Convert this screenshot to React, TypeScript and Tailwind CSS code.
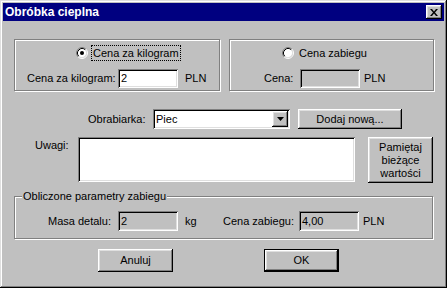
import React from "react";

function Radio({ checked }: { checked: boolean }) {
  return (
    <svg width="12" height="12" viewBox="0 0 12 12" className="shrink-0">
      <circle cx="6" cy="6" r="4.5" fill="#fff" />
      <path d="M2.11 9.89A5.5 5.5 0 0 1 9.89 2.11" stroke="#808080" fill="none" />
      <path d="M9.89 2.11A5.5 5.5 0 0 1 2.11 9.89" stroke="#fff" fill="none" />
      <path d="M2.82 9.18A4.5 4.5 0 0 1 9.18 2.82" stroke="#000" fill="none" />
      <path d="M9.18 2.82A4.5 4.5 0 0 1 2.82 9.18" stroke="#dfdfdf" fill="none" />
      {checked && <circle cx="6" cy="6" r="2" fill="#000" />}
    </svg>
  );
}

const sunken =
  "shadow-[inset_1px_1px_#808080,inset_-1px_-1px_#fff,inset_2px_2px_#000,inset_-2px_-2px_#dfdfdf]";
const raised =
  "shadow-[inset_-1px_-1px_#000,inset_1px_1px_#fff,inset_-2px_-2px_#808080,inset_2px_2px_#dfdfdf]";
const groupBox =
  "border border-[#808080] shadow-[inset_1px_1px_#fff,1px_1px_#fff]";

export default function App() {
  return (
    <div className="w-[447px] h-[288px] bg-[#c0c0c0] p-[3px] shadow-[inset_-1px_-1px_#000,inset_1px_1px_#dfdfdf,inset_-2px_-2px_#808080,inset_2px_2px_#fff] font-['Liberation_Sans',Arial,sans-serif] text-[11px] text-black leading-none">
      {/* Title bar */}
      <div className="h-[18px] bg-[#000080] flex items-center justify-between">
        <span className="pl-[2px] text-white font-bold text-[12px]">Obróbka cieplna</span>
        <div className={`w-[16px] h-[14px] mr-[2px] bg-[#c0c0c0] flex items-center justify-center ${raised}`}>
          <svg width="8" height="7" viewBox="0 0 8 7">
            <path d="M0 0h2l2 2.5L6 0h2L5 3.5 8 7H6L4 4.5 2 7H0l3-3.5z" fill="#000" />
          </svg>
        </div>
      </div>

      {/* Content */}
      <div className="pl-[11px] pt-[18px] flex flex-col">
        {/* Row 1: two group boxes */}
        <div className="flex gap-[9px]">
          <div className={`w-[206px] h-[52px] flex flex-col ${groupBox}`}>
            <div className="mt-[5px] h-[16px] flex items-center pl-[61px]">
              <Radio checked />
              <span className="ml-[3px] h-[16px] px-[1px] border border-dotted border-black flex items-center">
                Cena za kilogram
              </span>
            </div>
            <div className="mt-[8px] flex items-center pl-[12px]">
              <span className="w-[91px]">Cena za kilogram:</span>
              <div className={`w-[60px] h-[19px] bg-white flex items-center pl-[3px] ${sunken}`}>2</div>
              <span className="ml-[7px]">PLN</span>
            </div>
          </div>
          <div className={`w-[205px] h-[52px] flex flex-col ${groupBox}`}>
            <div className="mt-[5px] h-[16px] flex items-center pl-[52px]">
              <Radio checked={false} />
              <span className="ml-[5px]">Cena zabiegu</span>
            </div>
            <div className="mt-[8px] flex items-center pl-[34px]">
              <span className="w-[36px]">Cena:</span>
              <div className={`w-[60px] h-[19px] bg-[#c0c0c0] ${sunken}`} />
              <span className="ml-[4px]">PLN</span>
            </div>
          </div>
        </div>

        {/* Row 2: Obrabiarka */}
        <div className="mt-[18px] flex items-center pl-[74px]">
          <span className="w-[65px]">Obrabiarka:</span>
          <div className={`w-[137px] h-[20px] bg-white flex items-center justify-between pl-[3px] pr-[2px] ${sunken}`}>
            <span>Piec</span>
            <div className={`w-[16px] h-[16px] bg-[#c0c0c0] flex items-center justify-center ${raised}`}>
              <svg width="7" height="4" viewBox="0 0 7 4">
                <path d="M0 0h7L3.5 4z" fill="#000" />
              </svg>
            </div>
          </div>
          <div className={`ml-[8px] w-[104px] h-[20px] flex items-center justify-center ${raised}`}>
            Dodaj nową...
          </div>
        </div>

        {/* Row 3: Uwagi */}
        <div className="mt-[8px] flex items-start pl-[21px]">
          <span className="w-[43px] mt-[3px]">Uwagi:</span>
          <div className={`w-[277px] h-[45px] bg-white ${sunken}`} />
          <div className={`ml-[13px] w-[65px] h-[46px] flex flex-col items-center justify-center leading-[13px] ${raised}`}>
            <span>Pamiętaj</span>
            <span>bieżące</span>
            <span>wartości</span>
          </div>
        </div>

        {/* Group 3 */}
        <div className={`relative mt-[13px] w-[419px] h-[43px] ${groupBox}`}>
          <span className="absolute left-[7px] top-[-6px] px-[1px] bg-[#c0c0c0]">
            Obliczone parametry zabiegu
          </span>
          <div className="mt-[14px] flex items-center pl-[33px]">
            <span className="w-[70px]">Masa detalu:</span>
            <div className={`w-[60px] h-[20px] bg-[#c0c0c0] flex items-center pl-[3px] ${sunken}`}>2</div>
            <span className="ml-[7px] w-[38px]">kg</span>
            <span className="w-[76px]">Cena zabiegu:</span>
            <div className={`w-[60px] h-[20px] bg-[#c0c0c0] flex items-center pl-[3px] ${sunken}`}>4,00</div>
            <span className="ml-[4px]">PLN</span>
          </div>
        </div>

        {/* Buttons */}
        <div className="mt-[10px] flex">
          <div className={`ml-[84px] w-[75px] h-[23px] flex items-center justify-center ${raised}`}>Anuluj</div>
          <div className="ml-[91px] w-[75px] h-[23px] border border-black">
            <div className={`w-full h-full flex items-center justify-center ${raised}`}>OK</div>
          </div>
        </div>
      </div>
    </div>
  );
}
